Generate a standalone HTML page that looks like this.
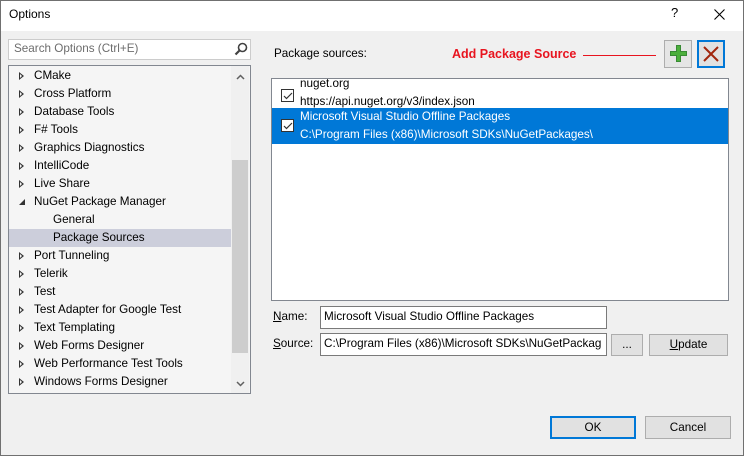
<!DOCTYPE html>
<html><head><style>
*{margin:0;padding:0;box-sizing:border-box}
body{width:744px;height:456px;overflow:hidden;background:#f0f0f0;font-family:"Segoe UI","Liberation Sans",sans-serif;font-size:11.7px;color:#000;position:relative}
.a{position:absolute}
.win{position:absolute;left:0;top:0;width:744px;height:456px;border:1px solid #707070}
.tb{position:absolute;left:1px;top:1px;width:742px;height:30px;background:#fff}
.row{position:absolute;left:0;height:18px;line-height:18px;white-space:nowrap}
.tri{position:absolute;left:10px;top:5px;width:0;height:0;border-top:4px solid transparent;border-bottom:4px solid transparent;border-left:5px solid #333}
.tri::after{content:"";position:absolute;left:-4px;top:-2px;border-top:2px solid transparent;border-bottom:2px solid transparent;border-left:2.5px solid #f5f5f5}
.btn{position:absolute;background:#e1e1e1;border:1px solid #adadad;text-align:center}
.cb{position:absolute;width:13px;height:13px;border:1px solid #333;background:#fff}
</style></head><body>
<div class="tb"></div>
<div class="win"></div>
<div class="a" style="left:9px;top:7px;font-size:12px">Options</div>
<div class="a" style="left:671px;top:5px;font-size:13px">?</div>
<svg class="a" style="left:714px;top:9px" width="11" height="11"><path d="M0.5 0.5L10.5 10.5M10.5 0.5L0.5 10.5" stroke="#000" stroke-width="1.1"/></svg>

<div class="a" style="left:8px;top:39px;width:243px;height:21px;background:#fff;border:1px solid #ccc"></div>
<div class="a" style="left:14px;top:42px;color:#6d6d6d">Search Options (Ctrl+E)</div>
<svg class="a" style="left:234px;top:42px" width="14" height="14"><circle cx="8.5" cy="5.5" r="4" fill="none" stroke="#424242" stroke-width="1.6"/><path d="M6 8L1.5 12.5" stroke="#424242" stroke-width="2.2"/></svg>

<div class="a" style="left:8px;top:65px;width:243px;height:329px;background:#f5f5f5;border:1px solid #828790">
 <div class="a" style="left:222px;top:0;width:18px;height:327px;background:#f0f0f0"></div>
 <div class="a" style="left:223px;top:94px;width:16px;height:193px;background:#cdcdcd"></div>
 <svg class="a" style="left:227px;top:8px" width="9" height="6"><path d="M1 5L4.5 1.5L8 5" fill="none" stroke="#606060" stroke-width="1.5"/></svg>
 <svg class="a" style="left:227px;top:315px" width="9" height="6"><path d="M1 1L4.5 4.5L8 1" fill="none" stroke="#606060" stroke-width="1.5"/></svg>
 <div class="row" style="top:1px;width:222px"><span class="tri"></span><span style="margin-left:25px">CMake</span></div>
 <div class="row" style="top:19px"><span class="tri"></span><span style="margin-left:25px">Cross Platform</span></div>
 <div class="row" style="top:37px"><span class="tri"></span><span style="margin-left:25px">Database Tools</span></div>
 <div class="row" style="top:55px"><span class="tri"></span><span style="margin-left:25px">F# Tools</span></div>
 <div class="row" style="top:73px"><span class="tri"></span><span style="margin-left:25px">Graphics Diagnostics</span></div>
 <div class="row" style="top:91px"><span class="tri"></span><span style="margin-left:25px">IntelliCode</span></div>
 <div class="row" style="top:109px"><span class="tri"></span><span style="margin-left:25px">Live Share</span></div>
 <div class="row" style="top:127px"><svg class="a" style="left:10px;top:6px" width="7" height="7"><path d="M6 0L6 6L0 6Z" fill="#333"/></svg><span style="margin-left:25px">NuGet Package Manager</span></div>
 <div class="row" style="top:145px"><span style="margin-left:44px">General</span></div>
 <div class="row" style="top:163px;width:222px;background:#cccedb"><span style="margin-left:44px">Package Sources</span></div>
 <div class="row" style="top:181px"><span class="tri"></span><span style="margin-left:25px">Port Tunneling</span></div>
 <div class="row" style="top:199px"><span class="tri"></span><span style="margin-left:25px">Telerik</span></div>
 <div class="row" style="top:217px"><span class="tri"></span><span style="margin-left:25px">Test</span></div>
 <div class="row" style="top:235px"><span class="tri"></span><span style="margin-left:25px">Test Adapter for Google Test</span></div>
 <div class="row" style="top:253px"><span class="tri"></span><span style="margin-left:25px">Text Templating</span></div>
 <div class="row" style="top:271px"><span class="tri"></span><span style="margin-left:25px">Web Forms Designer</span></div>
 <div class="row" style="top:289px"><span class="tri"></span><span style="margin-left:25px">Web Performance Test Tools</span></div>
 <div class="row" style="top:307px"><span class="tri"></span><span style="margin-left:25px">Windows Forms Designer</span></div>
</div>

<div class="a" style="left:274px;top:47px">Package sources:</div>
<div class="a" style="left:452px;top:47px;color:#e8141f;font-weight:bold;font-size:12.5px">Add Package Source</div>
<div class="a" style="left:583px;top:55px;width:73px;height:1px;background:#e8141f"></div>
<div class="btn" style="left:664px;top:40px;width:28px;height:28px;background:#e5e5e5"></div>
<svg class="a" style="left:670px;top:45px" width="17" height="17"><path d="M6 0h5v6h6v5h-6v6h-5v-6h-6v-5h6z" fill="#388a34"/><path d="M7 1h3v6h6v3h-6v6h-3v-6h-6v-3h6z" fill="#4caf3c"/></svg>
<div class="a" style="left:697px;top:40px;width:28px;height:28px;background:#e1e1e1;border:2px solid #0078d7"></div>
<svg class="a" style="left:703px;top:46px" width="16" height="16"><path d="M1 1L15 15M15 1L1 15" stroke="#a1260d" stroke-width="2"/></svg>

<div class="a" style="left:271px;top:78px;width:458px;height:223px;background:#fff;border:1px solid #828790">
 <div class="cb" style="left:9px;top:10px"></div>
 <svg class="a" style="left:11px;top:13px" width="10" height="8"><path d="M1 4L3.5 6.5L9 1" fill="none" stroke="#333" stroke-width="1.2"/></svg>
 <div class="a" style="left:28px;top:-4px;line-height:18px">nuget.org<br>https://api.nuget.org/v3/index.json</div>
 <div class="a" style="left:0;top:29px;width:456px;height:36px;background:#0078d7"></div>
 <div class="cb" style="left:9px;top:40px"></div>
 <svg class="a" style="left:11px;top:43px" width="10" height="8"><path d="M1 4L3.5 6.5L9 1" fill="none" stroke="#333" stroke-width="1.2"/></svg>
 <div class="a" style="left:28px;top:29px;line-height:18px;color:#fff">Microsoft Visual Studio Offline Packages<br>C:\Program Files (x86)\Microsoft SDKs\NuGetPackages\</div>
</div>

<div class="a" style="left:273px;top:310px"><u>N</u>ame:</div>
<div class="a" style="left:320px;top:306px;width:287px;height:23px;background:#fff;border:1px solid #7a7a7a;padding:3px 0 0 3px;white-space:nowrap">Microsoft Visual Studio Offline Packages</div>
<div class="a" style="left:273px;top:337px"><u>S</u>ource:</div>
<div class="a" style="left:320px;top:333px;width:287px;height:23px;background:#fff;border:1px solid #7a7a7a;padding:3px 0 0 3px;white-space:nowrap;overflow:hidden">C:\Program Files (x86)\Microsoft SDKs\NuGetPackag</div>
<div class="btn" style="left:611px;top:334px;width:32px;height:22px;line-height:20px">...</div>
<div class="btn" style="left:649px;top:334px;width:79px;height:22px;line-height:20px"><u>U</u>pdate</div>
<div class="btn" style="left:550px;top:416px;width:86px;height:23px;line-height:19px;border:2px solid #0078d7">OK</div>
<div class="btn" style="left:645px;top:416px;width:86px;height:23px;line-height:21px">Cancel</div>
</body></html>
